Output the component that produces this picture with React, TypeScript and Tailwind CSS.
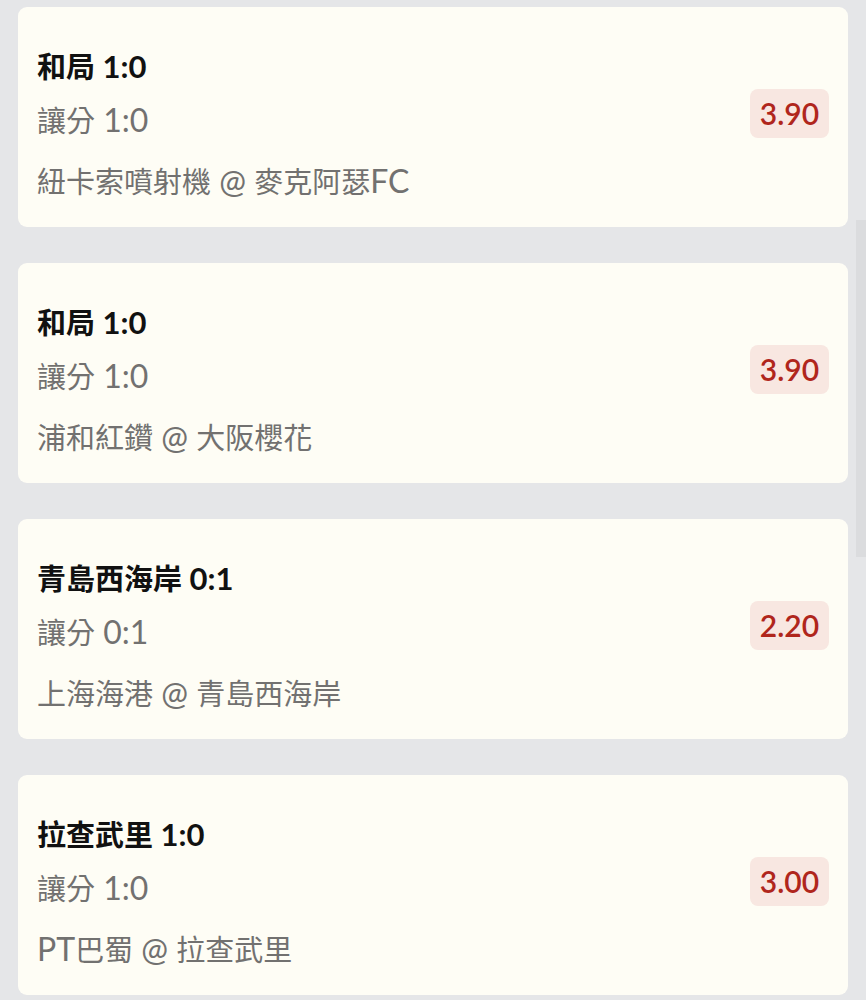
import React from "react";

const items = [
  { title: "和局 1:0", line: "讓分 1:0", match: "紐卡索噴射機 @ 麥克阿瑟FC", odds: "3.90" },
  { title: "和局 1:0", line: "讓分 1:0", match: "浦和紅鑽 @ 大阪櫻花", odds: "3.90" },
  { title: "青島西海岸 0:1", line: "讓分 0:1", match: "上海海港 @ 青島西海岸", odds: "2.20" },
  { title: "拉查武里 1:0", line: "讓分 1:0", match: "PT巴蜀 @ 拉查武里", odds: "3.00" },
];

function Mixed({ text, latinClass }: { text: string; latinClass: string }) {
  const parts = text.match(/[\u3000-\u9fff\uff00-\uffef]+|[^\u3000-\u9fff\uff00-\uffef]+/g) || [];
  return (
    <>
      {parts.map((p, i) =>
        /[\u3000-\u9fff\uff00-\uffef]/.test(p) ? (
          <span key={i}>{p}</span>
        ) : (
          <span key={i} className={latinClass}>
            {p}
          </span>
        )
      )}
    </>
  );
}

export default function App() {
  return (
    <div
      className="relative w-[866px] h-[1000px] overflow-hidden bg-[#e5e6e8] pt-[7px] pl-[18px] pr-[18px]"
      style={{ fontFamily: 'Lato, "Noto Sans CJK TC", sans-serif' }}
    >
      <div className="flex flex-col gap-[36px]">
        {items.map((it, i) => (
          <div
            key={i}
            className="h-[220px] rounded-[9px] bg-[#fefdf5] pl-[19px] pr-[19px] flex items-center justify-between"
          >
            <div className="flex flex-col pt-[39px] pb-[28px] h-full">
              <div className="text-[29px] leading-[40px] font-bold text-[#111111] whitespace-nowrap">
                <Mixed text={it.title} latinClass="text-[31px]" />
              </div>
              <div className="mt-[13px] text-[29px] leading-[40px] text-[#727170] whitespace-nowrap">
                <Mixed text={it.line} latinClass="text-[32px]" />
              </div>
              <div className="mt-[20px] text-[29px] leading-[40px] text-[#727170] whitespace-nowrap">
                <Mixed text={it.match} latinClass="text-[32px]" />
              </div>
            </div>
            <div className="mb-[8px] h-[49px] w-[79px] rounded-[8px] bg-[#f8e7e1] flex items-center justify-center text-[30px] font-semibold text-[#b0261c]">
              {it.odds}
            </div>
          </div>
        ))}
      </div>
      <div className="absolute right-0 top-[220px] h-[337px] w-[10px] bg-[#dbdcde]" />
    </div>
  );
}
